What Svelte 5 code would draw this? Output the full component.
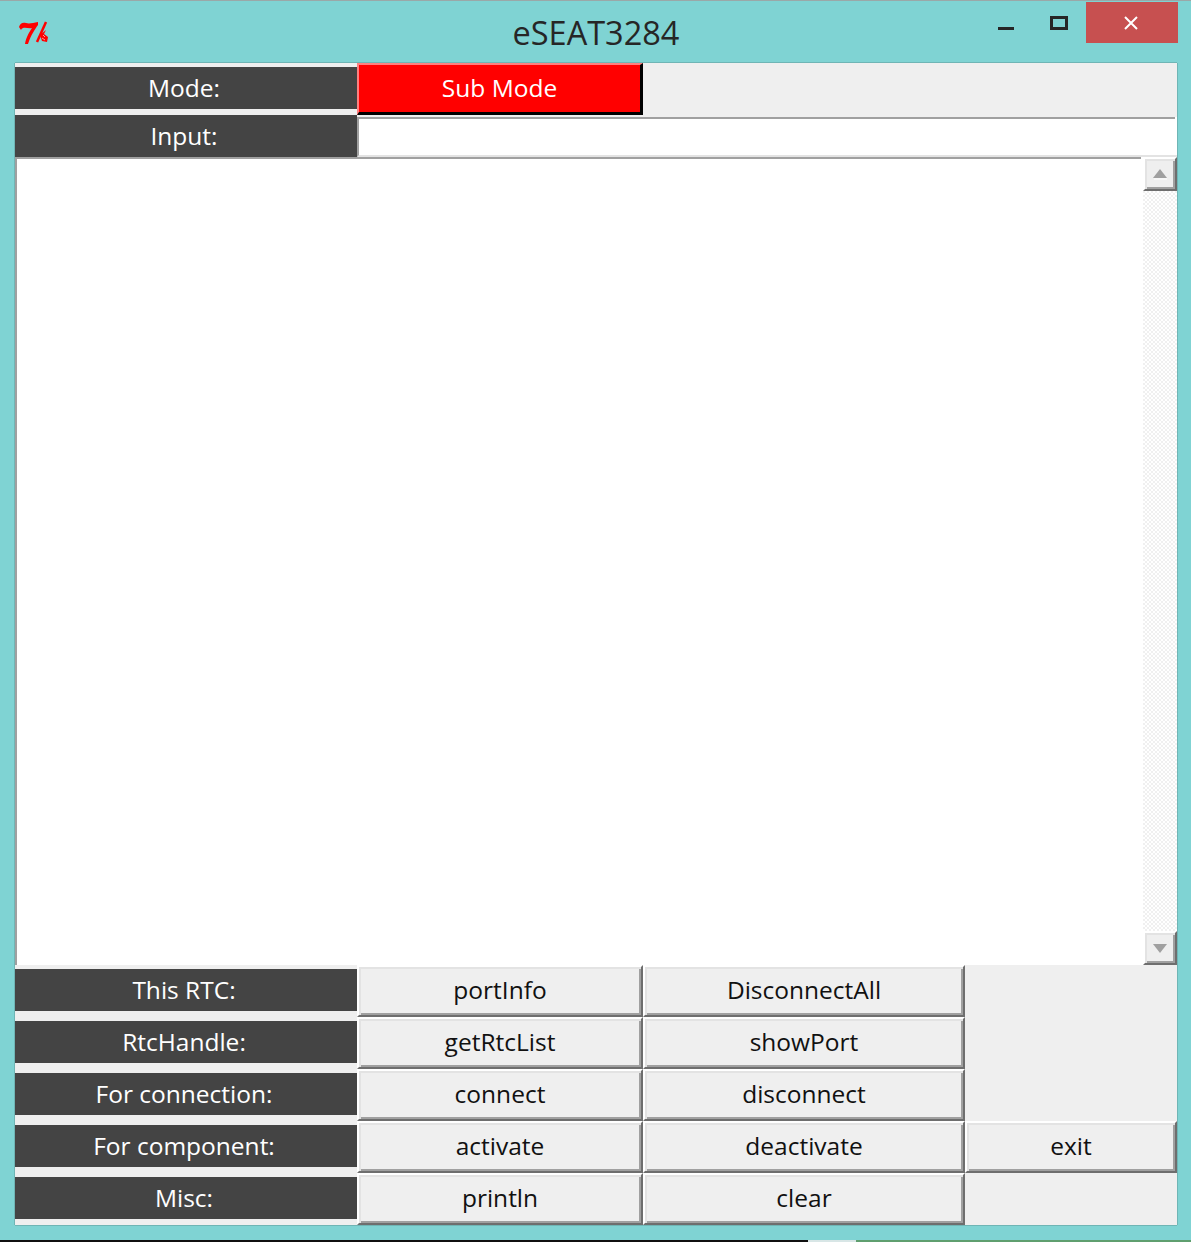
<script>
  const rows = [
    { label: 'This RTC:', first: 'portInfo', second: 'DisconnectAll' },
    { label: 'RtcHandle:', first: 'getRtcList', second: 'showPort' },
    { label: 'For connection:', first: 'connect', second: 'disconnect' },
    { label: 'For component:', first: 'activate', second: 'deactivate', third: 'exit' },
    { label: 'Misc:', first: 'println', second: 'clear' }
  ];
</script>

<div class="window">
  <div class="titlebar">
    <svg class="tk-icon" viewBox="0 0 32 26" width="32" height="26">
      <path d="M1 7 C2 3 5 2 8 3 C11 4 15 3 20 2 L20 5 C17 9 13 15 10 24 L7 24 C8 17 12 11 14 8 C10 9 5 6 3 10 Z" fill="#f00" />
      <path d="M28 2 L19 22" stroke="#f00" stroke-width="2.5" fill="none" />
      <path d="M22 15 L28 10 L26 14 L30 17 L29 22 L24 21 Z" fill="#f00" />
      <path d="M25 15 L27 17 M24 18 L27 20" stroke="#f7a0a0" stroke-width="1" fill="none" />
    </svg>
    <span class="title">eSEAT3284</span>
    <div class="controls">
      <span class="minimize"></span>
      <span class="maximize"></span>
      <span class="close">
        <svg viewBox="0 0 14 14" width="14" height="14">
          <path d="M1 1 L13 13 M13 1 L1 13" stroke="#fff" stroke-width="2" fill="none" />
        </svg>
      </span>
    </div>
  </div>

  <div class="content">
    <div class="top-row">
      <div class="label-cell"><div class="label">Mode:</div></div>
      <button class="mode-btn">Sub Mode</button>
    </div>
    <div class="input-row">
      <div class="label">Input:</div>
      <div class="input-box"></div>
    </div>
    <div class="text-area">
      <div class="text-body"></div>
      <div class="scrollbar">
        <div class="arrow">
          <svg viewBox="0 0 16 12" width="16" height="12">
            <path d="M8 1 L15 10 L1 10 Z" fill="#a0a0a0" />
            <path d="M2 11 H15" stroke="#fff" stroke-width="1" />
          </svg>
        </div>
        <div class="track"></div>
        <div class="arrow">
          <svg viewBox="0 0 16 12" width="16" height="12">
            <path d="M1 2 H15 L8 11 Z" fill="#a0a0a0" />
          </svg>
        </div>
      </div>
    </div>
    <div class="button-grid">
      {#each rows as row}
        <div class="label-cell"><div class="label">{row.label}</div></div>
        <button class="btn">{row.first}</button>
        <button class="btn">{row.second}</button>
        {#if row.third}
          <button class="btn">{row.third}</button>
        {:else}
          <div></div>
        {/if}
      {/each}
    </div>
  </div>

  <div class="screen-edge">
    <span class="edge-dark"></span>
    <span class="edge-light"></span>
    <span class="edge-green"></span>
  </div>
</div>

<style>
  :global(body) {
    background: #7fd3d3;
  }

  .window {
    width: 1191px;
    height: 1242px;
    box-sizing: border-box;
    padding: 0 14px 0 15px;
    background: #7fd3d3;
    border-top: 1px solid #9aa8a8;
    font-family: "Open Sans", "Noto Sans", sans-serif;
    font-size: 24.5px;
    overflow: hidden;
    display: flex;
    flex-direction: column;
  }

  .titlebar {
    height: 62px;
    flex: none;
    display: flex;
    align-items: flex-start;
    justify-content: center;
    position: relative;
  }

  .tk-icon {
    position: absolute;
    left: 3px;
    top: 19px;
  }

  .title {
    font-size: 32.5px;
    line-height: 40px;
    margin-top: 12px;
    color: #262626;
  }

  .controls {
    position: absolute;
    top: 1px;
    right: -1px;
    display: flex;
    align-items: flex-start;
  }

  .minimize {
    width: 16px;
    height: 3px;
    margin: 25px 36px 0 0;
    background: #262626;
  }

  .maximize {
    width: 18px;
    height: 14px;
    box-sizing: border-box;
    margin: 14px 18px 0 0;
    border: 3px solid #262626;
  }

  .close {
    width: 92px;
    height: 41px;
    padding-right: 2px;
    box-sizing: border-box;
    background: #c75050;
    display: flex;
    align-items: center;
    justify-content: center;
  }

  .content {
    width: 1162px;
    flex: none;
    background: #efefef;
    box-shadow: 1px 0 0 #6fb5b5, 0 1px 0 #6fb5b5, -1px 0 0 #6fb5b5, 0 -1px 0 #6fb5b5;
  }

  .top-row {
    display: grid;
    grid-template-columns: 342px 286px 1fr;
    height: 52px;
  }

  .label-cell {
    padding: 4px 0 6px;
    height: 52px;
    box-sizing: border-box;
  }

  .label {
    height: 42px;
    box-sizing: border-box;
    padding: 0 4px 2px 0;
    background: #444444;
    color: #fff;
    display: flex;
    align-items: center;
    justify-content: center;
  }

  .mode-btn {
    height: 52px;
    padding: 0 0 2px;
    font: inherit;
    color: #fff;
    background: #ff0000;
    border-style: solid;
    border-width: 2px 3px 3px 2px;
    border-color: #ff8080 #000 #000 #ff8080;
  }

  .input-row {
    display: grid;
    grid-template-columns: 342px 1fr;
    height: 42px;
  }

  .input-box {
    margin-top: 2px;
    background: linear-gradient(#a0a0a0, #a0a0a0) no-repeat 0 0 / calc(100% - 2px) 2px, #fff;
    border-left: 2px solid #a0a0a0;
    border-bottom: 2px solid #e3e3e3;
  }

  .text-area {
    height: 808px;
    display: flex;
    background: #fff;
  }

  .text-body {
    flex: 1;
    margin-right: 2px;
    border-top: 2px solid #a0a0a0;
    border-left: 2px solid #a0a0a0;
  }

  .scrollbar {
    width: 34px;
    display: flex;
    flex-direction: column;
    background: repeating-conic-gradient(#f0f0f0 0 25%, #fff 0 50%) 0 0 / 4px 4px;
  }

  .track {
    flex: 1;
  }

  .arrow {
    height: 34px;
    box-sizing: border-box;
    background: #efefef;
    border-style: solid;
    border-width: 2px;
    border-color: #fff #6e6e6e #6e6e6e #fff;
    box-shadow: inset 2px 2px 0 #e3e3e3, inset -2px -2px 0 #a0a0a0;
    display: flex;
    align-items: center;
    justify-content: center;
  }

  .button-grid {
    display: grid;
    grid-template-columns: 342px 286px 322px 212px;
    grid-auto-rows: 52px;
  }

  .btn {
    padding: 0 0 3px;
    font: inherit;
    color: #111;
    background: #efefef;
    border-style: solid;
    border-width: 2px;
    border-color: #fff #6e6e6e #6e6e6e #fff;
    box-shadow: inset 2px 2px 0 #e3e3e3, inset -2px -2px 0 #a0a0a0;
  }

  .screen-edge {
    flex: none;
    height: 2px;
    margin: auto -14px 0 -15px;
    display: flex;
  }

  .edge-dark {
    width: 808px;
    background: #101010;
  }

  .edge-light {
    width: 48px;
    background: #d8e6e6;
  }

  .edge-green {
    flex: 1;
    background: #5f9f6f;
  }
</style>
